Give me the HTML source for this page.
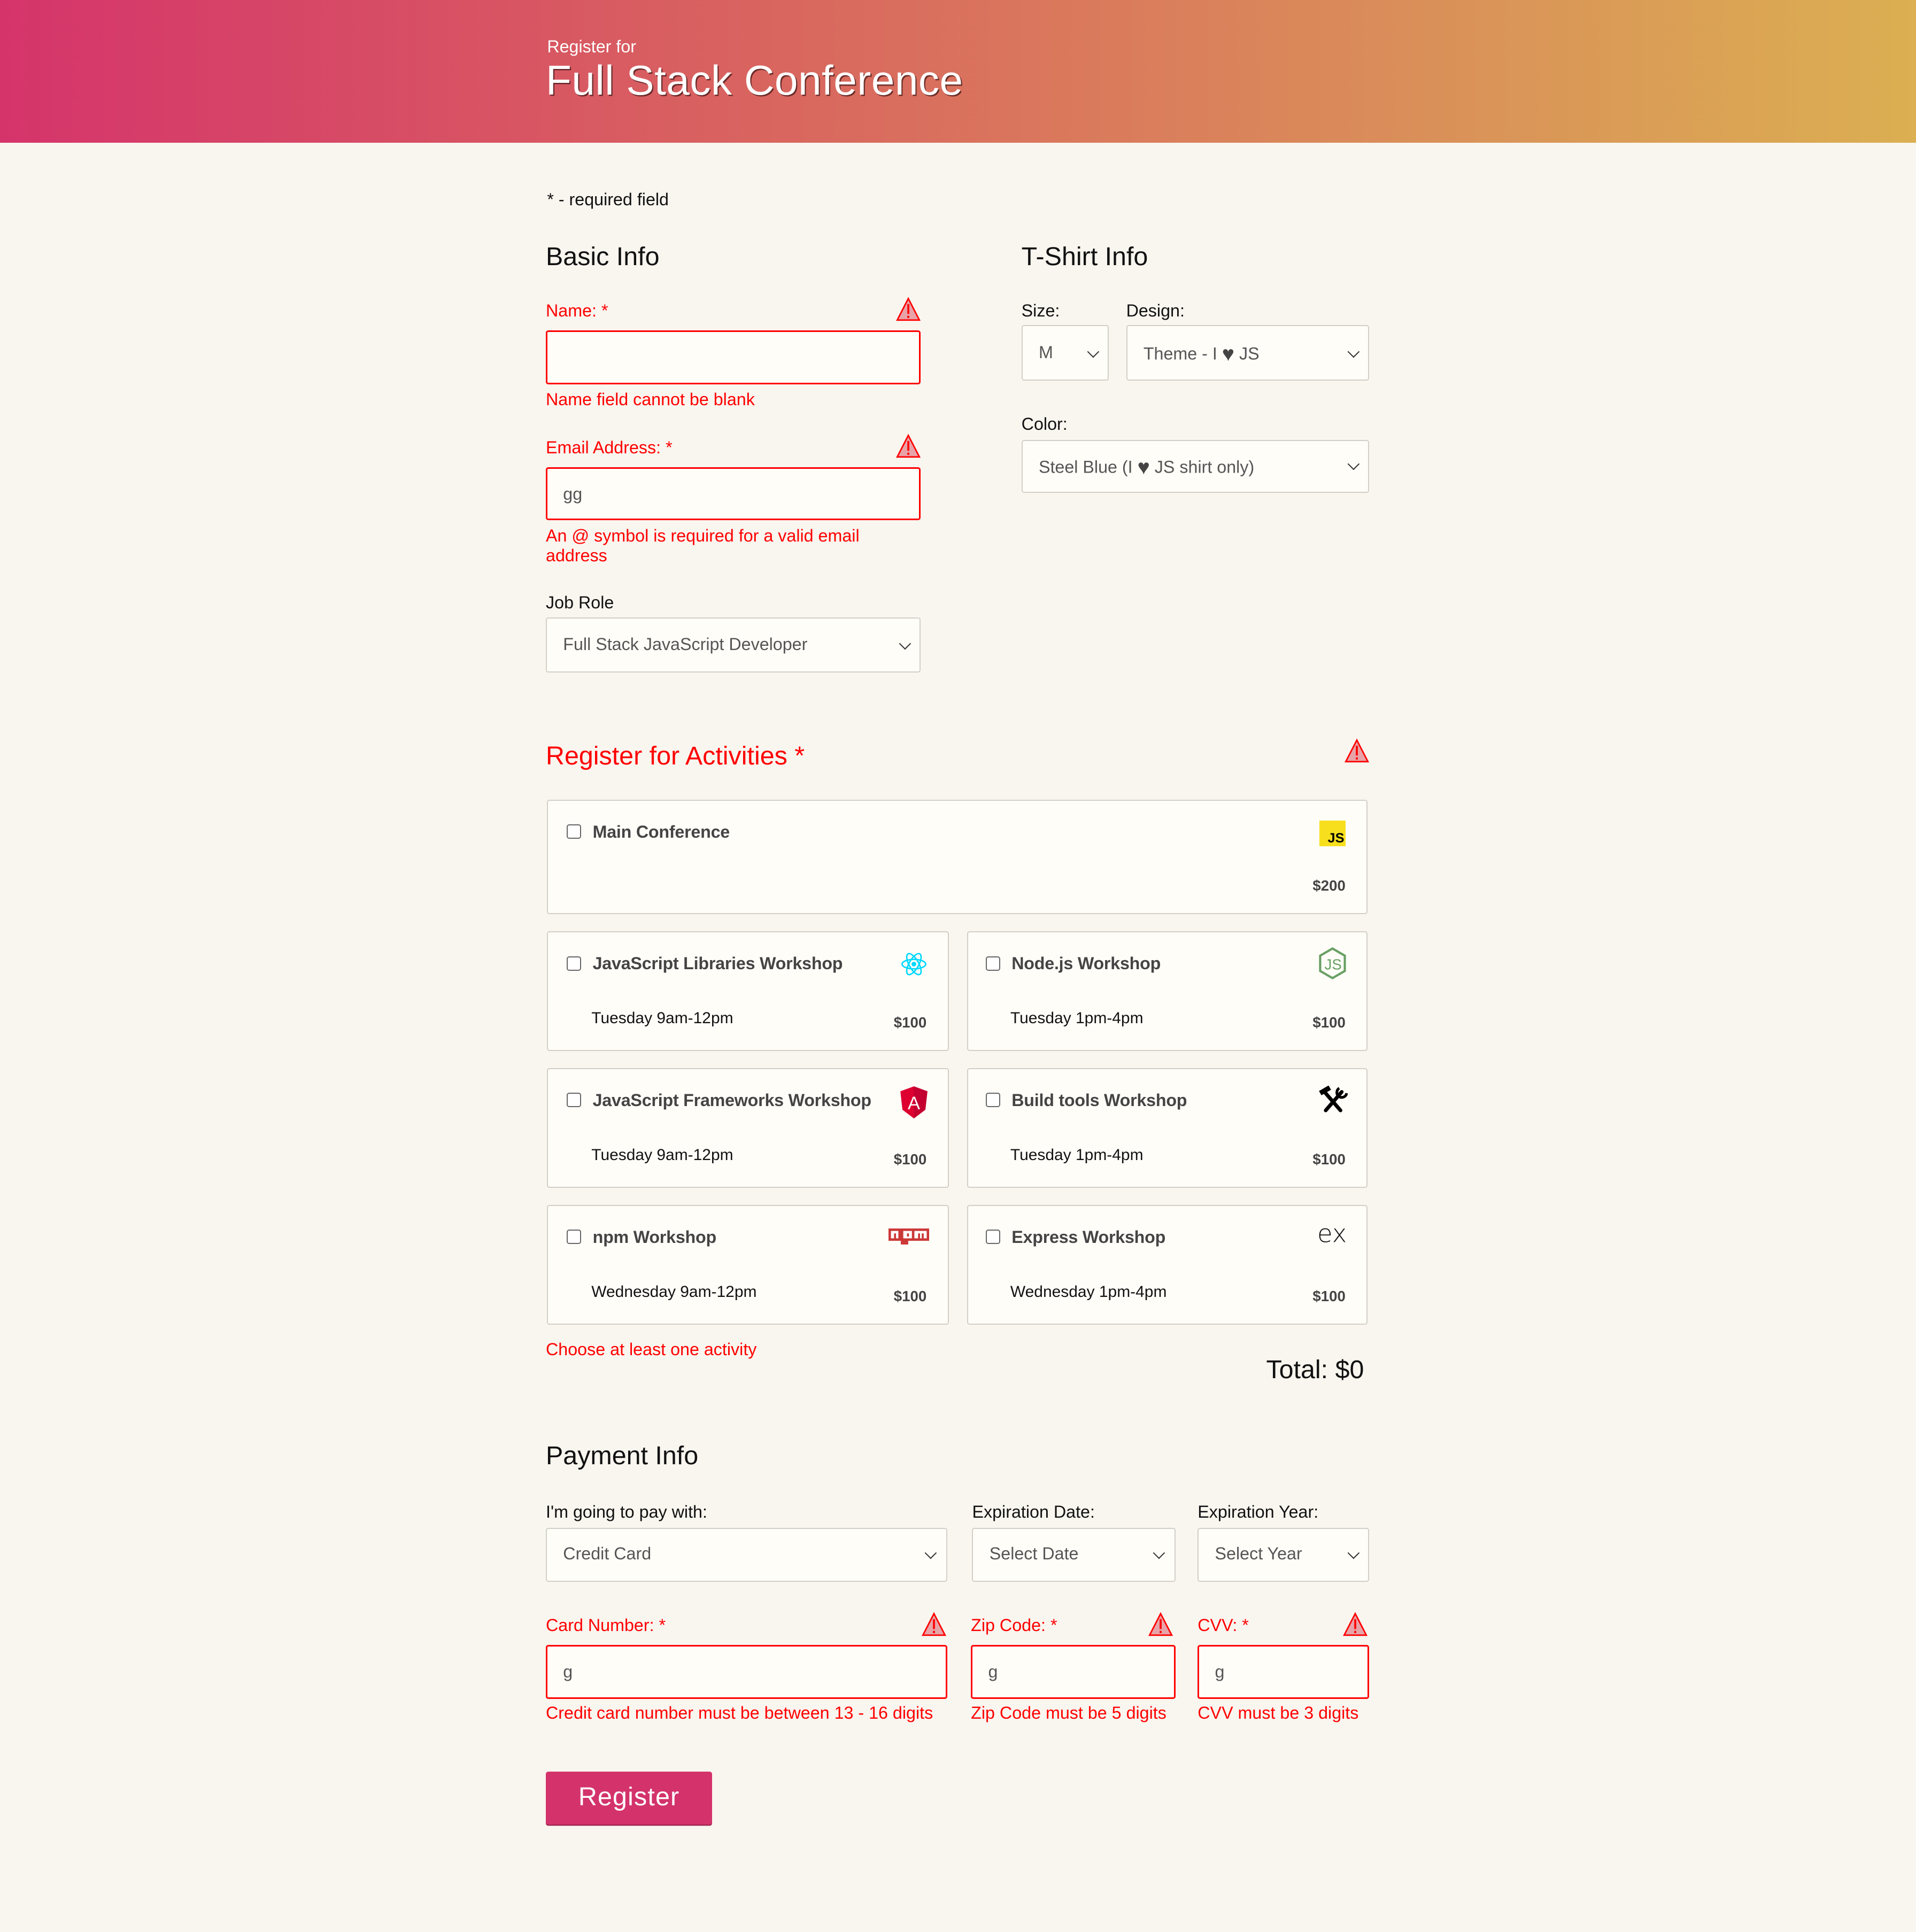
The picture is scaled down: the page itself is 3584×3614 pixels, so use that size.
<!DOCTYPE html>
<html><head><meta charset="utf-8">
<style>
html,body{margin:0;padding:0;background:#f9f5ef;}
body{width:3584px;height:3614px;overflow:hidden;}
#w{zoom:2.3048;width:1555px;height:1568px;position:relative;font-family:"Liberation Sans",sans-serif;}
.t{position:absolute;white-space:nowrap;line-height:1;}
.hdr{position:absolute;left:0;top:0;width:1555px;height:116px;background:linear-gradient(90deg,#d5346b 0%,#d9655f 40%,#da8a5a 70%,#dbaf52 100%);}
.box{position:absolute;box-sizing:border-box;background:#fffdf8;border:1px solid #d3cfc8;border-radius:2px;}
.err{border:1.5px solid #f00;}
.red{color:#f00;}
.sel{color:#555;font-size:14px;}
.chev{position:absolute;width:6px;height:6px;border-right:1.3px solid #333;border-bottom:1.3px solid #333;transform:rotate(45deg);}
.cb{position:absolute;width:10px;height:10px;border:1px solid #666;border-radius:2px;background:#fff;}
.ti{font-weight:bold;font-size:14px;color:#444;letter-spacing:-0.1px;}
.pr{font-weight:bold;font-size:12px;color:#444;}
.dt{font-size:13px;color:#111;}
.h{font-size:17px;color:#444;vertical-align:-1px;}
</style></head><body><div id="w">
<div class="hdr"></div>
<div class="t" style="left:444px;top:31px;font-size:14px;color:#fff;">Register for</div>
<div class="t" style="left:443px;top:48px;font-size:34px;color:#fff;letter-spacing:0.2px;text-shadow:1px 1px 0 rgba(60,20,20,.7);">Full Stack Conference</div>

<div class="t" style="left:444px;top:155px;font-size:14px;color:#111;">* - required field</div>
<div class="t" style="left:443px;top:198px;font-size:21px;color:#111;">Basic Info</div>
<div class="t" style="left:829px;top:198px;font-size:21px;color:#111;">T-Shirt Info</div>

<svg width="0" height="0" style="position:absolute"><defs><g id="warn"><polygon points="10,1.5 19,19 1,19" fill="#e8a3a8" stroke="#f00" stroke-width="1.2"/><rect x="9.2" y="6" width="1.6" height="8" fill="#f00"/><rect x="9.2" y="15.5" width="1.6" height="1.8" fill="#f00"/></g></defs></svg>

<div class="t red" style="left:443px;top:245px;font-size:14px;">Name: *</div>
<svg style="position:absolute;left:727px;top:241px" width="20" height="20"><use href="#warn"/></svg>
<div class="box err" style="left:443px;top:268px;width:304px;height:44px;"></div>
<div class="t red" style="left:443px;top:317px;font-size:14px;">Name field cannot be blank</div>

<div class="t red" style="left:443px;top:356px;font-size:14px;">Email Address: *</div>
<svg style="position:absolute;left:727px;top:352px" width="20" height="20"><use href="#warn"/></svg>
<div class="box err" style="left:443px;top:379px;width:304px;height:43px;"></div>
<div class="t sel" style="left:457px;top:394px;">gg</div>
<div class="t red" style="left:443px;top:427px;font-size:14px;line-height:16px;">An @ symbol is required for a valid email<br>address</div>

<div class="t" style="left:443px;top:482px;font-size:14px;color:#111;">Job Role</div>
<div class="box" style="left:443px;top:501px;width:304px;height:45px;"></div>
<div class="t sel" style="left:457px;top:516px;">Full Stack JavaScript Developer</div>
<div class="chev" style="left:731px;top:519px;"></div>

<div class="t" style="left:829px;top:245px;font-size:14px;color:#111;">Size:</div>
<div class="t" style="left:914px;top:245px;font-size:14px;color:#111;">Design:</div>
<div class="box" style="left:829px;top:264px;width:71px;height:45px;"></div>
<div class="t sel" style="left:843px;top:279px;">M</div>
<div class="chev" style="left:884px;top:282px;"></div>
<div class="box" style="left:914px;top:264px;width:197px;height:45px;"></div>
<div class="t sel" style="left:928px;top:279px;">Theme - I <span class="h">♥</span> JS</div>
<div class="chev" style="left:1095px;top:282px;"></div>
<div class="t" style="left:829px;top:337px;font-size:14px;color:#111;">Color:</div>
<div class="box" style="left:829px;top:357px;width:282px;height:43px;"></div>
<div class="t sel" style="left:843px;top:371px;">Steel Blue (I <span class="h">♥</span> JS shirt only)</div>
<div class="chev" style="left:1095px;top:373px;"></div>

<div class="t red" style="left:443px;top:603px;font-size:21px;">Register for Activities *</div>
<svg style="position:absolute;left:1091px;top:599px" width="20" height="20"><use href="#warn"/></svg>

<div class="box" style="left:444px;top:649px;width:666px;height:93px;"></div>
<div class="cb" style="left:460px;top:669px;"></div>
<div class="t ti" style="left:481px;top:668px;">Main Conference</div>
<div style="position:absolute;left:1071px;top:666px;width:21px;height:21px;background:#f7df1e;"><span class="t" style="right:1px;bottom:1px;font-size:11px;font-weight:bold;color:#000;">JS</span></div>
<div class="t pr" style="right:463px;top:713px;">$200</div>

<div class="box" style="left:444px;top:756px;width:326px;height:97px;"></div>
<div class="cb" style="left:460px;top:776px;"></div>
<div class="t ti" style="left:481px;top:775px;">JavaScript Libraries Workshop</div>
<svg style="position:absolute;left:730px;top:771px" width="23" height="23" viewBox="-12 -12 24 24"><g fill="none" stroke="#00d8ff" stroke-width="1.2"><ellipse rx="10" ry="4"/><ellipse rx="10" ry="4" transform="rotate(60)"/><ellipse rx="10" ry="4" transform="rotate(120)"/></g><circle r="2" fill="#00d8ff"/></svg>
<div class="t dt" style="left:480px;top:820px;">Tuesday 9am-12pm</div>
<div class="t pr" style="right:803px;top:824px;">$100</div>

<div class="box" style="left:785px;top:756px;width:325px;height:97px;"></div>
<div class="cb" style="left:800px;top:776px;"></div>
<div class="t ti" style="left:821px;top:775px;">Node.js Workshop</div>
<svg style="position:absolute;left:1070px;top:769px" width="23" height="26" viewBox="0 0 23 26"><polygon points="11.5,1 21.5,6.8 21.5,19.2 11.5,25 1.5,19.2 1.5,6.8" fill="none" stroke="#68a063" stroke-width="1.8"/><text x="12" y="18" font-size="12" font-family="Liberation Sans" fill="#68a063" text-anchor="middle">JS</text></svg>
<div class="t dt" style="left:820px;top:820px;">Tuesday 1pm-4pm</div>
<div class="t pr" style="right:463px;top:824px;">$100</div>

<div class="box" style="left:444px;top:867px;width:326px;height:97px;"></div>
<div class="cb" style="left:460px;top:887px;"></div>
<div class="t ti" style="left:481px;top:886px;">JavaScript Frameworks Workshop</div>
<svg style="position:absolute;left:730px;top:881px" width="23" height="27" viewBox="0 0 23 27"><polygon points="11.5,0.5 22.5,4.5 20.8,19.5 11.5,26.5 2.2,19.5 0.5,4.5" fill="#dd0031"/><polygon points="11.5,0.5 22.5,4.5 20.8,19.5 11.5,26.5" fill="#c3002f"/><text x="11.5" y="19" font-size="15" font-family="Liberation Sans" fill="#fff" text-anchor="middle">A</text></svg>
<div class="t dt" style="left:480px;top:931px;">Tuesday 9am-12pm</div>
<div class="t pr" style="right:803px;top:935px;">$100</div>

<div class="box" style="left:785px;top:867px;width:325px;height:97px;"></div>
<div class="cb" style="left:800px;top:887px;"></div>
<div class="t ti" style="left:821px;top:886px;">Build tools Workshop</div>
<svg style="position:absolute;left:1070px;top:881px" width="24" height="22" viewBox="0 0 24 22"><g stroke="#000" stroke-width="3" stroke-linecap="round"><line x1="5" y1="5" x2="18" y2="20"/><line x1="19" y1="5" x2="6" y2="20"/></g><rect x="1" y="2" width="9" height="4" fill="#000" transform="rotate(-30 5 4)"/><path d="M17 2 A4 4 0 1 0 23 6" fill="none" stroke="#000" stroke-width="2.2"/></svg>
<div class="t dt" style="left:820px;top:931px;">Tuesday 1pm-4pm</div>
<div class="t pr" style="right:463px;top:935px;">$100</div>

<div class="box" style="left:444px;top:978px;width:326px;height:97px;"></div>
<div class="cb" style="left:460px;top:998px;"></div>
<div class="t ti" style="left:481px;top:997px;">npm Workshop</div>
<svg style="position:absolute;left:721px;top:997px" width="33" height="14" viewBox="0 0 33 14"><rect x="0" y="0" width="33" height="10" fill="#cb3837"/><rect x="10" y="9" width="6" height="4" fill="#cb3837"/><g fill="#fff"><rect x="2" y="2" width="6" height="6"/><rect x="12" y="2" width="7" height="6"/><rect x="21" y="2" width="10" height="6"/></g><g fill="#cb3837"><rect x="4.5" y="4" width="1.6" height="4"/><rect x="15" y="4" width="1.6" height="2.5"/><rect x="12" y="8" width="2.2" height="4"/><rect x="24" y="4" width="1.6" height="4"/><rect x="27" y="4" width="1.6" height="4"/></g></svg>
<div class="t dt" style="left:480px;top:1042px;">Wednesday 9am-12pm</div>
<div class="t pr" style="right:803px;top:1046px;">$100</div>

<div class="box" style="left:785px;top:978px;width:325px;height:97px;"></div>
<div class="cb" style="left:800px;top:998px;"></div>
<div class="t ti" style="left:821px;top:997px;">Express Workshop</div>
<svg style="position:absolute;left:1069px;top:993px" width="24" height="18" viewBox="0 0 24 18"><text x="0" y="15" font-size="20" font-family="DejaVu Sans" font-weight="200" fill="#111" textLength="24" lengthAdjust="spacingAndGlyphs">ex</text></svg>
<div class="t dt" style="left:820px;top:1042px;">Wednesday 1pm-4pm</div>
<div class="t pr" style="right:463px;top:1046px;">$100</div>

<div class="t red" style="left:443px;top:1088px;font-size:14px;">Choose at least one activity</div>
<div class="t" style="right:448px;top:1101px;font-size:21px;color:#111;">Total: $0</div>

<div class="t" style="left:443px;top:1171px;font-size:21px;color:#111;">Payment Info</div>
<div class="t" style="left:443px;top:1220px;font-size:14px;color:#111;">I'm going to pay with:</div>
<div class="t" style="left:789px;top:1220px;font-size:14px;color:#111;">Expiration Date:</div>
<div class="t" style="left:972px;top:1220px;font-size:14px;color:#111;">Expiration Year:</div>
<div class="box" style="left:443px;top:1240px;width:326px;height:44px;"></div>
<div class="t sel" style="left:457px;top:1254px;">Credit Card</div>
<div class="chev" style="left:752px;top:1257px;"></div>
<div class="box" style="left:789px;top:1240px;width:165px;height:44px;"></div>
<div class="t sel" style="left:803px;top:1254px;">Select Date</div>
<div class="chev" style="left:937px;top:1257px;"></div>
<div class="box" style="left:972px;top:1240px;width:139px;height:44px;"></div>
<div class="t sel" style="left:986px;top:1254px;">Select Year</div>
<div class="chev" style="left:1095px;top:1257px;"></div>

<div class="t red" style="left:443px;top:1312px;font-size:14px;">Card Number: *</div>
<svg style="position:absolute;left:748px;top:1308px" width="20" height="20"><use href="#warn"/></svg>
<div class="t red" style="left:788px;top:1312px;font-size:14px;">Zip Code: *</div>
<svg style="position:absolute;left:932px;top:1308px" width="20" height="20"><use href="#warn"/></svg>
<div class="t red" style="left:972px;top:1312px;font-size:14px;">CVV: *</div>
<svg style="position:absolute;left:1090px;top:1308px" width="20" height="20"><use href="#warn"/></svg>
<div class="box err" style="left:443px;top:1335px;width:326px;height:44px;"></div>
<div class="t sel" style="left:457px;top:1350px;">g</div>
<div class="box err" style="left:788px;top:1335px;width:166px;height:44px;"></div>
<div class="t sel" style="left:802px;top:1350px;">g</div>
<div class="box err" style="left:972px;top:1335px;width:139px;height:44px;"></div>
<div class="t sel" style="left:986px;top:1350px;">g</div>
<div class="t red" style="left:443px;top:1383px;font-size:14px;">Credit card number must be between 13 - 16 digits</div>
<div class="t red" style="left:788px;top:1383px;font-size:14px;">Zip Code must be 5 digits</div>
<div class="t red" style="left:972px;top:1383px;font-size:14px;">CVV must be 3 digits</div>

<div style="position:absolute;left:443px;top:1438px;width:135px;height:43px;background:#d3336a;border-radius:2px;box-shadow:0 1px 0 #9d2550;"></div>
<div class="t" style="left:443px;top:1448px;width:135px;text-align:center;font-size:21px;color:#fff;letter-spacing:.5px;">Register</div>
</div></body></html>
